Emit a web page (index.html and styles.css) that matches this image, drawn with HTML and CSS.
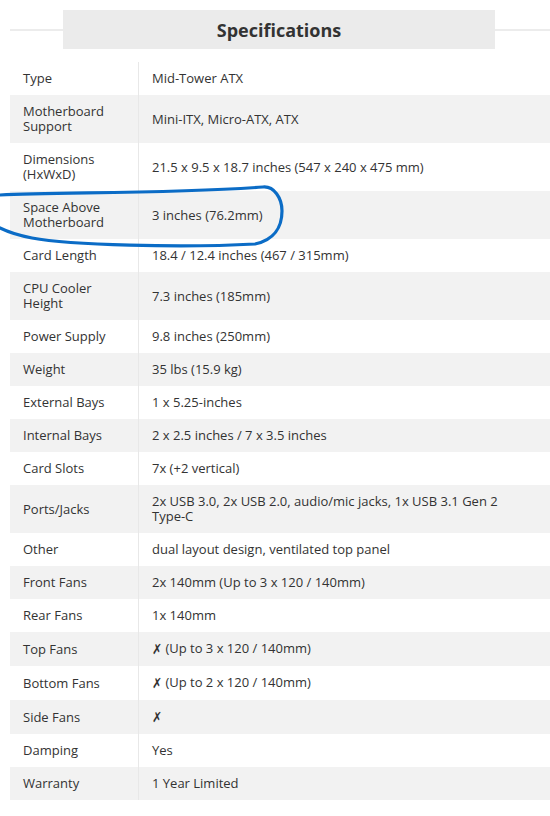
FILE: index.html
```html
<!DOCTYPE html>
<html>
<head>
<meta charset="utf-8">
<link rel="stylesheet" href="styles.css">
</head>
<body>
<div class="page">
  <div class="spec-head">
    <span class="rule rule-left"></span>
    <h2 class="title">Specifications</h2>
    <span class="rule rule-right"></span>
  </div>
  <table class="specs">
    <tbody>
      <tr><td class="k">Type</td><td class="v">Mid-Tower ATX</td></tr>
      <tr><td class="k">Motherboard Support</td><td class="v">Mini-ITX, Micro-ATX, ATX</td></tr>
      <tr><td class="k">Dimensions (HxWxD)</td><td class="v">21.5 x 9.5 x 18.7 inches (547 x 240 x 475 mm)</td></tr>
      <tr><td class="k">Space Above Motherboard</td><td class="v">3 inches (76.2mm)</td></tr>
      <tr><td class="k">Card Length</td><td class="v">18.4 / 12.4 inches (467 / 315mm)</td></tr>
      <tr><td class="k">CPU Cooler Height</td><td class="v">7.3 inches (185mm)</td></tr>
      <tr><td class="k">Power Supply</td><td class="v">9.8 inches (250mm)</td></tr>
      <tr><td class="k">Weight</td><td class="v">35 lbs (15.9 kg)</td></tr>
      <tr><td class="k">External Bays</td><td class="v">1 x 5.25-inches</td></tr>
      <tr><td class="k">Internal Bays</td><td class="v">2 x 2.5 inches / 7 x 3.5 inches</td></tr>
      <tr><td class="k">Card Slots</td><td class="v">7x (+2 vertical)</td></tr>
      <tr><td class="k">Ports/Jacks</td><td class="v">2x USB 3.0, 2x USB 2.0, audio/mic jacks, 1x USB 3.1 Gen 2 <span class="nowrap">Type-C</span></td></tr>
      <tr><td class="k">Other</td><td class="v">dual layout design, ventilated top panel</td></tr>
      <tr><td class="k">Front Fans</td><td class="v">2x 140mm (Up to 3 x 120 / 140mm)</td></tr>
      <tr><td class="k">Rear Fans</td><td class="v">1x 140mm</td></tr>
      <tr><td class="k">Top Fans</td><td class="v"><span class="x">✗</span> (Up to 3 x 120 / 140mm)</td></tr>
      <tr><td class="k">Bottom Fans</td><td class="v"><span class="x">✗</span> (Up to 2 x 120 / 140mm)</td></tr>
      <tr><td class="k">Side Fans</td><td class="v"><span class="x">✗</span></td></tr>
      <tr><td class="k">Damping</td><td class="v">Yes</td></tr>
      <tr><td class="k">Warranty</td><td class="v">1 Year Limited</td></tr>
    </tbody>
  </table>
  <svg class="annotation" width="300" height="70" viewBox="0 180 300 70" xmlns="http://www.w3.org/2000/svg">
    <path d="M0,195 C60,192 170,194 263,187 C274,186 282,198 282,211 C282,227 274,240 255,244 C180,248 70,245 32,238 C16,235 6,231 0,228" fill="none" stroke="#0b6cc6" stroke-width="3.2" stroke-linecap="round"/>
  </svg>
</div>
</body>
</html>
```

FILE: styles.css
```css
html, body {
  margin: 0;
  padding: 0;
  background: #ffffff;
}

body {
  width: 550px;
  overflow: hidden;
  font-family: "Open Sans", "Liberation Sans", sans-serif;
  color: #333333;
}

.page {
  position: relative;
  padding: 10px 0 0 10px;
}

.spec-head {
  display: flex;
  align-items: center;
  height: 39px;
}

.rule {
  height: 2px;
  background: #ececec;
}

.rule-left {
  width: 53px;
}

.rule-right {
  flex: 1;
}

.title {
  margin: 0;
  width: 432px;
  height: 39px;
  line-height: 40px;
  background: #ebebeb;
  text-align: center;
  font-size: 18px;
  font-weight: 700;
  color: #333333;
}

.specs {
  margin-top: 13px;
  width: 540px;
  border-collapse: collapse;
  font-size: 13px;
  line-height: 15px;
}

.specs td {
  padding: 9px 13px;
  vertical-align: middle;
}

.specs tr:nth-child(even) {
  background: #f2f2f2;
}

.specs .k {
  width: 102px;
  border-right: 1px solid #e8e8e8;
}

.specs .v {
  padding-right: 13px;
}

.nowrap {
  white-space: nowrap;
}

.x {
  display: inline-block;
  font-family: "DejaVu Sans", sans-serif;
  font-size: 12px;
  font-weight: 300;
  transform: scaleY(1.15);
}

.annotation {
  position: absolute;
  left: 0;
  top: 180px;
}
```
